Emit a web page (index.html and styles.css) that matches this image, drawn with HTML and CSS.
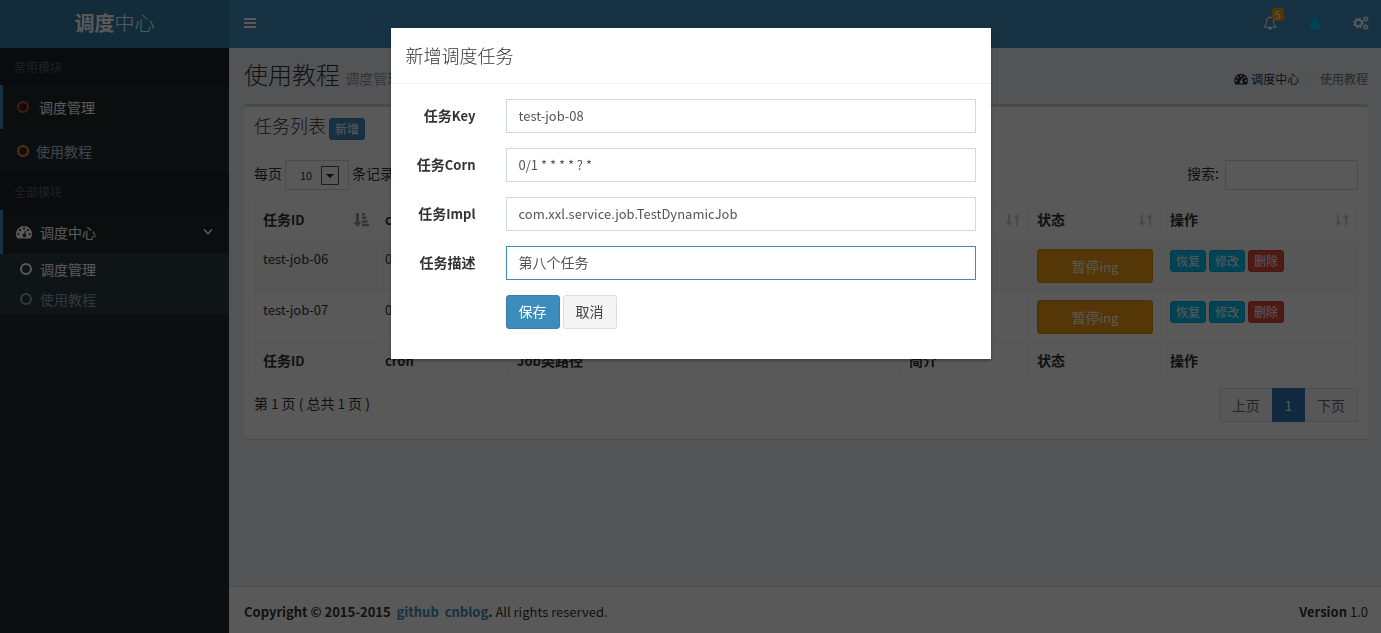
FILE: index.html
```html
<!DOCTYPE html>
<html lang="zh-CN">
<head>
<meta charset="utf-8">
<title>调度中心</title>
<link rel="stylesheet" href="styles.css">
</head>
<body>
<svg class="defs" aria-hidden="true">
  <symbol id="dash" viewBox="0 0 16 14"><path fill-rule="evenodd" d="M8 1a8 8 0 0 0-8 8c0 1.600.5 3 1.200 4.200.1.200.3.300.5.300h12.600c.2 0 .4-.1.500-.3A8 8 0 0 0 8 1zM2.300 8a1.100 1.100 0 1 0 0 2.200 1.100 1.100 0 0 0 0-2.200zM4 4a1.100 1.100 0 1 0 0 2.200A1.100 1.100 0 0 0 4 4zM8 2.200a1.100 1.100 0 1 0 0 2.200 1.100 1.100 0 0 0 0-2.200zM12 4a1.100 1.100 0 1 0 0 2.200A1.100 1.100 0 0 0 12 4zM13.700 8a1.100 1.100 0 1 0 0 2.200 1.100 1.100 0 0 0 0-2.200zM9.200 5.400l-.9 3.400a1.700 1.700 0 1 0 1 .3l.9-3.400z"/></symbol>
  <symbol id="sort" viewBox="0 0 16 16"><path d="M3 2h2v8h2.500L4 14 .5 10H3zM11 14h2V6h2.500L12 2 8.500 6H11z"/></symbol>
  <symbol id="sort-asc" viewBox="0 0 16 16"><path d="M3 1h3v9h2.500L4.500 15 .5 10H3zM9 1h3v2.500H9zM9 4.600h4.300v2.500H9zM9 8.200h5.500v2.500H9zM9 11.800h7v2.500H9z"/></symbol>
</svg>

<header class="topbar">
  <a class="logo" href="#"><b>调度</b>中心</a>
  <nav class="navbar">
    <button class="icon-btn" type="button" aria-label="菜单"><svg width="12" height="12" viewBox="0 0 12 12"><path d="M0 1h12v2H0zM0 5h12v2H0zM0 9h12v2H0z"/></svg></button>
    <div class="nav-right">
      <a class="nav-icon" href="#" aria-label="通知"><svg width="14" height="14" viewBox="0 0 14 14"><path fill-rule="evenodd" d="M7 0c.5 0 .8.300.8.800v.3c2 .4 3.200 2 3.200 4 0 2.900.9 4.400 2.500 5.600 0 .6-.4 1-1 1H9a2 2 0 0 1-4 0H1.500c-.6 0-1-.4-1-1C2.100 9.500 3 8 3 5.100c0-2 1.200-3.600 3.200-4V.8C6.200.3 6.500 0 7 0zM7 2C5 2 4 3.500 4 5.100c0 2.500-.6 4.300-1.900 5.600h9.800C10.600 9.400 10 7.600 10 5.100 10 3.500 9 2 7 2z"/></svg><span class="badge">5</span></a>
      <a class="nav-icon user" href="#" aria-label="用户"><svg width="12" height="14" viewBox="0 0 12 14"><path d="M6 1a3.200 3.200 0 0 1 2.300 5.500C10.500 7 11.500 8.500 11.500 11c0 1.300-.8 2-2 2h-7c-1.200 0-2-.7-2-2 0-2.500 1-4 3.200-4.500A3.200 3.200 0 0 1 6 1z"/></svg></a>
      <a class="nav-icon" href="#" aria-label="设置"><svg width="16" height="14" viewBox="0 0 16 14"><g fill="none" stroke="currentColor"><circle cx="5.500" cy="7" r="3.200" stroke-width="2"/><circle cx="5.500" cy="7" r="4.700" stroke-width="1.600" stroke-dasharray="1.850 1.850"/><circle cx="12.800" cy="3" r="1.600" stroke-width="1.400"/><circle cx="12.800" cy="3" r="2.500" stroke-width="1" stroke-dasharray="1.300 1.300"/><circle cx="12.800" cy="11" r="1.600" stroke-width="1.400"/><circle cx="12.800" cy="11" r="2.500" stroke-width="1" stroke-dasharray="1.300 1.300"/></g></svg></a>
    </div>
  </nav>
</header>

<div class="wrapper">
  <aside class="sidebar">
    <h2 class="menu-head">常用模块</h2>
    <a class="item active" href="#"><span class="ring red"></span>调度管理</a>
    <a class="item tight" href="#"><span class="ring orange"></span>使用教程</a>
    <h2 class="menu-head">全部模块</h2>
    <a class="item active tree" href="#"><svg class="dash" width="16" height="14"><use href="#dash"/></svg>调度中心<svg class="chev" width="10" height="8" viewBox="0 0 10 8"><path d="M1 1.500l4 4 4-4" fill="none" stroke="currentColor" stroke-width="1.600"/></svg></a>
    <div class="submenu">
      <a class="sub on" href="#"><span class="ring"></span>调度管理</a>
      <a class="sub" href="#"><span class="ring"></span>使用教程</a>
    </div>
  </aside>

  <div class="content">
    <main class="main">
      <div class="page-head">
        <h1>使用教程 <small>调度管理</small></h1>
        <nav class="crumbs"><a href="#"><svg width="14" height="12"><use href="#dash"/></svg>调度中心</a><i>/</i><span>使用教程</span></nav>
      </div>
      <section class="box">
        <div class="box-head"><h3>任务列表</h3><button class="btn xs primary" type="button">新增</button></div>
        <div class="tools">
          <label class="len">每页 <span class="select"><select><option>10</option></select><svg width="18" height="19" viewBox="0 0 18 19"><path d="M.5.500h17v18H.5z" fill="none" stroke="#555"/><path d="M5 8h8l-4 4z" fill="#222"/></svg></span> 条记录</label>
          <label class="search">搜索: <input type="search"></label>
        </div>
        <table class="grid">
          <colgroup><col class="c1"><col class="c2"><col><col class="c4"><col class="c5"><col class="c6"></colgroup>
          <thead><tr>
            <th><div>任务<span class="lat">ID</span><svg class="asc"><use href="#sort-asc"/></svg></div></th>
            <th><div><span class="lat">cron</span><svg><use href="#sort"/></svg></div></th>
            <th><div><span class="lat">Job</span>类路径<svg><use href="#sort"/></svg></div></th>
            <th><div>简介<svg><use href="#sort"/></svg></div></th>
            <th><div>状态<svg><use href="#sort"/></svg></div></th>
            <th><div>操作<svg><use href="#sort"/></svg></div></th>
          </tr></thead>
          <tbody>
            <tr class="odd"><td><span class="lat">test-job-06</span></td><td><span class="lat">0/1 * * * * ? *</span></td><td></td><td></td><td><button class="btn warn" type="button">暂停<span class="lat">ing</span></button></td><td><div class="ops"><button class="btn xs info" type="button">恢复</button><button class="btn xs info" type="button">修改</button><button class="btn xs danger" type="button">删除</button></div></td></tr>
            <tr><td><span class="lat">test-job-07</span></td><td><span class="lat">0/1 * * * * ? *</span></td><td></td><td></td><td><button class="btn warn" type="button">暂停<span class="lat">ing</span></button></td><td><div class="ops"><button class="btn xs info" type="button">恢复</button><button class="btn xs info" type="button">修改</button><button class="btn xs danger" type="button">删除</button></div></td></tr>
          </tbody>
          <tfoot><tr><th>任务<span class="lat">ID</span></th><th><span class="lat">cron</span></th><th><span class="lat">Job</span>类路径</th><th>简介</th><th>状态</th><th>操作</th></tr></tfoot>
        </table>
        <div class="table-foot">
          <p>第 <span class="lat">1</span> 页 ( 总共 <span class="lat">1</span> 页 )</p>
          <nav class="pager"><a href="#">上页</a><a class="cur" href="#"><span class="lat">1</span></a><a href="#">下页</a></nav>
        </div>
      </section>
    </main>
    <footer class="foot">
      <div><b>Copyright © 2015-2015 &nbsp;<a href="#">github</a> &nbsp;<a href="#">cnblog</a>.</b> All rights reserved.</div>
      <div><b>Version</b> 1.0</div>
    </footer>
  </div>
</div>

<div class="backdrop">
  <div class="modal" role="dialog" aria-modal="true" aria-labelledby="dlg-title">
    <h4 id="dlg-title">新增调度任务</h4>
    <form class="form">
      <label for="f-key">任务<span class="lat">Key</span></label><input id="f-key" type="text" value="test-job-08">
      <label for="f-cron">任务<span class="lat">Corn</span></label><input id="f-cron" type="text" value="0/1 * * * * ? *">
      <label for="f-impl">任务<span class="lat">Impl</span></label><input id="f-impl" type="text" value="com.xxl.service.job.TestDynamicJob">
      <label for="f-desc">任务描述</label><input id="f-desc" class="focus" type="text" value="第八个任务">
      <div class="actions"><button class="btn primary" type="button">保存</button><button class="btn plain" type="button">取消</button></div>
    </form>
  </div>
</div>
</body>
</html>
```
FILE: styles.css
```css
* { box-sizing: border-box; }
body {
  margin: 0;
  min-height: 100vh;
  display: flex;
  flex-direction: column;
  font: 14px/20px "Noto Sans CJK SC", "Noto Sans", sans-serif;
  color: #333;
  background: #222d32;
}
h1, h2, h3, h4, p { margin: 0; font-weight: 300; }
a { color: inherit; text-decoration: none; }
button, input, select { font: inherit; color: inherit; margin: 0; }
svg { fill: currentColor; flex: none; }
.defs { display: none; }
.lat { font-size: 13px; }

.topbar { display: flex; height: 48px; color: #fff; }
.logo {
  width: 229px;
  background: #367fa9;
  font-size: 20px;
  font-weight: 300;
  line-height: 46px;
  text-align: center;
}
.logo b { font-weight: 700; }
.navbar {
  flex: 1;
  display: flex;
  align-items: center;
  justify-content: space-between;
  padding: 0 12px 2px 15px;
  background: #3c8dbc;
}
.icon-btn { display: flex; padding: 0; border: 0; background: none; color: #fff; }
.nav-right { display: flex; align-items: center; gap: 32px; }
.nav-icon { position: relative; display: flex; }
.nav-icon.user { color: #00c0ef; }
.badge {
  position: absolute;
  left: 9px;
  top: -8px;
  padding: 0 3px;
  border-radius: 3px;
  background: #f39c12;
  font-size: 10px;
  line-height: 13px;
}

.wrapper { flex: 1; display: flex; }
.sidebar { width: 229px; color: #b8c7ce; }
.menu-head {
  padding: 0 14px;
  background: #1a2226;
  color: #4b646f;
  font-size: 12px;
  font-weight: 400;
  line-height: 37px;
}
.item {
  display: flex;
  align-items: center;
  gap: 10px;
  height: 44px;
  padding: 0 16px 0 14px;
  border-left: 3px solid transparent;
  line-height: 18px;
}
.item.tight { gap: 7px; }
.item.active { background: #1e282c; border-left-color: #3c8dbc; color: #fff; }
.item.tree { gap: 8px; padding-left: 13px; }
.chev { margin-left: auto; }
.ring { width: 12px; height: 12px; border: 2px solid currentColor; border-radius: 50%; }
.ring.red { color: #dd4b39; }
.ring.orange { color: #f39c12; }
.submenu { background: #2c3b41; }
.sub { display: flex; align-items: center; gap: 8px; height: 30px; padding: 0 0 1px 20px; color: #8aa4af; }
.sub.on { color: #fff; }

.content { flex: 1; min-width: 0; display: flex; flex-direction: column; background: #ecf0f5; }
.main { flex: 1; padding: 0 13px 0 15px; }
.page-head { display: flex; align-items: center; justify-content: space-between; height: 56px; }
h1 { font-size: 24px; line-height: 28px; }
h1 small { font-size: 14px; color: #777; }
.crumbs { display: flex; align-items: center; padding-top: 6px; font-size: 12px; color: #777; }
.crumbs a { display: flex; align-items: center; gap: 3px; color: #333; }
.crumbs i { padding: 0 8px; color: #d8d8d8; }

.box {
  padding: 0 10px 17px;
  border-top: 3px solid #d2d6de;
  border-radius: 3px;
  background: #fff;
  box-shadow: 0 1px 1px rgba(0, 0, 0, .1);
}
.box-head { display: flex; gap: 3px; height: 43px; padding-top: 11px; }
h3 { font-size: 18px; font-weight: 300; line-height: 14px; }
.tools { display: flex; justify-content: space-between; height: 52px; padding-top: 10px; }
.tools label { display: flex; gap: 3px; height: 30px; line-height: 26px; }
.tools .search { gap: 6px; }
.search input { width: 133px; height: 30px; padding: 0 10px; border: 1px solid #d2d6de; background: #fff; }
.select { position: relative; display: flex; }
.select select {
  width: 64px;
  height: 30px;
  padding: 0 14px;
  appearance: none;
  border: 1px solid #d2d6de;
  border-radius: 0;
  background: #fff;
  font-size: 11px;
}
.select svg { position: absolute; right: 10px; top: 6px; pointer-events: none; }

.grid {
  width: 100%;
  table-layout: fixed;
  border-collapse: separate;
  border-spacing: 0;
  border: 1px solid #f4f4f4;
  border-width: 1px 0 0 1px;
}
.grid th, .grid td {
  padding: 8px;
  border: 1px solid #f4f4f4;
  border-width: 0 1px 1px 0;
  text-align: left;
  vertical-align: top;
}
.grid thead th { height: 38px; padding-top: 7px; border-bottom-width: 2px; }
.grid th { font-weight: 700; line-height: 19px; }
.grid th div { display: flex; align-items: center; height: 19px; margin-right: -1px; }
.grid th svg { width: 16px; height: 16px; margin-left: auto; opacity: .22; }
.grid th .asc { opacity: .5; }
.grid .odd td { background: #f9f9f9; }
.grid td { height: 51px; line-height: 18px; }
.c1 { width: 122px; }
.c2 { width: 132px; }
.c4 { width: 128px; }
.c5 { width: 133px; }
.c6 { width: 196px; }
.ops { display: flex; gap: 3px; padding-top: 1px; }

.btn {
  height: 34px;
  padding: 0 12px;
  border: 1px solid transparent;
  border-radius: 3px;
  line-height: 20px;
  color: #fff;
  white-space: nowrap;
}
.btn.xs { height: 22px; padding: 0 5px; font-size: 12px; }
.primary { background: #3c8dbc; border-color: #367fa9; }
.info { background: #00c0ef; border-color: #00acd6; }
.danger { background: #dd4b39; border-color: #d73925; }
.warn { display: block; width: 100%; background: #f39c12; border-color: #e08e0b; }
.plain { background: #f4f4f4; border-color: #ddd; color: #444; }

.table-foot { display: flex; justify-content: space-between; padding-top: 9px; }
.table-foot p { padding-top: 5px; font-weight: 400; }
.pager { display: flex; }
.pager a { height: 34px; padding: 6px 12px; border: 1px solid #ddd; background: #fafafa; color: #666; }
.pager a:first-child { border-right: 0; border-radius: 4px 0 0 4px; }
.pager a:last-child { border-left: 0; border-radius: 0 4px 4px 0; }
.pager .cur { background: #337ab7; border-color: #337ab7; color: #fff; }

.foot {
  display: flex;
  justify-content: space-between;
  align-items: center;
  height: 47px;
  padding: 4px 13px 0 15px;
  border-top: 1px solid #d2d6de;
  background: #fff;
  font-size: 13px;
}
.foot a { color: #3c8dbc; }

.backdrop {
  position: fixed;
  inset: 0;
  padding-top: 28px;
  background: rgba(0, 0, 0, .65);
}
.modal { width: 600px; margin: 0 auto; background: #fff; box-shadow: 0 2px 3px rgba(0, 0, 0, .3); }
.modal h4 {
  height: 56px;
  padding: 0 15px;
  border-bottom: 1px solid #f4f4f4;
  font-size: 18px;
  font-weight: 300;
  line-height: 55px;
}
.form {
  display: grid;
  grid-template-columns: 70px 1fr;
  gap: 15px 30px;
  padding: 15px 15px 30px;
}
.form label { padding-top: 6px; text-align: right; font-weight: 700; }
.form input {
  width: 100%;
  height: 34px;
  padding: 5px 12px 7px;
  border: 1px solid #d2d6de;
  border-radius: 0;
  outline: 0;
  font-size: 13px;
  color: #555;
}
.form input.focus { border-color: #3c8dbc; font-size: 14px; }
.form .btn { padding-bottom: 2px; }
.actions { grid-column: 2; display: flex; gap: 3px; }
```
